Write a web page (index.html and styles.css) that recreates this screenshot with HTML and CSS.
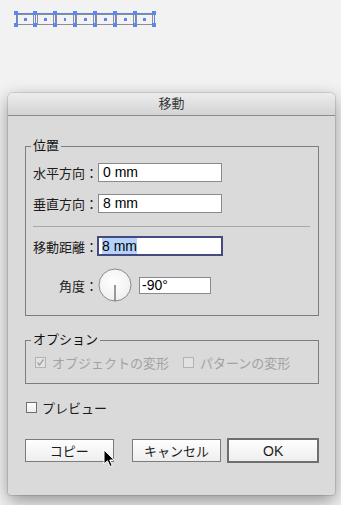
FILE: index.html
```html
<!DOCTYPE html>
<html lang="ja">
<head>
  <meta charset="UTF-8" />
  <title>移動</title>
  <link rel="stylesheet" href="styles.css">
</head>
<body>
  <div class="artboard">
    <svg class="selection" width="144" height="18" viewBox="0 0 144 18">
      <g fill="none" stroke="#8d8d8d" stroke-width="1">
        <rect x="3.5" y="3.5" width="16" height="10" />
        <rect x="23.5" y="3.5" width="16" height="10" />
        <rect x="42.5" y="3.5" width="17" height="10" />
        <rect x="62.5" y="3.5" width="17" height="10" />
        <rect x="82.5" y="3.5" width="17" height="10" />
        <rect x="102.5" y="3.5" width="17" height="10" />
        <rect x="122.5" y="3.5" width="16" height="10" />
      </g>
      <g stroke="#5b86ee" stroke-width="1">
        <line x1="2" y1="2.5" x2="140" y2="2.5" />
        <line x1="2.5" y1="2" x2="2.5" y2="14" />
        <line x1="21.5" y1="2" x2="21.5" y2="14" />
        <line x1="41.5" y1="2" x2="41.5" y2="14" />
        <line x1="61.5" y1="2" x2="61.5" y2="14" />
        <line x1="81.5" y1="2" x2="81.5" y2="14" />
        <line x1="101.5" y1="2" x2="101.5" y2="14" />
        <line x1="121.5" y1="2" x2="121.5" y2="14" />
        <line x1="140.5" y1="2" x2="140.5" y2="14" />
      </g>
      <g fill="#5b86ee">
        <rect x="0" y="0" width="4" height="4" /><rect x="0" y="12" width="4" height="4" />
        <rect x="19" y="0" width="4" height="4" /><rect x="19" y="12" width="4" height="4" />
        <rect x="39" y="0" width="4" height="4" /><rect x="39" y="12" width="4" height="4" />
        <rect x="59" y="0" width="4" height="4" /><rect x="59" y="12" width="4" height="4" />
        <rect x="79" y="0" width="4" height="4" /><rect x="79" y="12" width="4" height="4" />
        <rect x="99" y="0" width="4" height="4" /><rect x="99" y="12" width="4" height="4" />
        <rect x="119" y="0" width="4" height="4" /><rect x="119" y="12" width="4" height="4" />
        <rect x="138" y="0" width="4" height="4" /><rect x="138" y="12" width="4" height="4" />
        <rect x="10" y="7" width="3" height="3" />
        <rect x="30" y="7" width="3" height="3" />
        <rect x="50" y="7" width="2" height="3" />
        <rect x="70" y="7" width="3" height="3" />
        <rect x="90" y="7" width="3" height="3" />
        <rect x="110" y="7" width="3" height="3" />
        <rect x="129" y="7" width="3" height="3" />
      </g>
    </svg>
  </div>

  <div class="dialog">
    <div class="titlebar">移動</div>
    <div class="dialog-body">
      <fieldset class="group position">
        <legend>位置</legend>
        <div class="field-row">
          <label class="field-label">水平方向：</label>
          <div class="input">0 mm</div>
        </div>
        <div class="field-row next">
          <label class="field-label">垂直方向：</label>
          <div class="input">8 mm</div>
        </div>
        <div class="separator"></div>
        <div class="field-row">
          <label class="field-label">移動距離：</label>
          <div class="input focused"><span class="selected">8 mm</span></div>
        </div>
        <div class="field-row angle-row">
          <label class="field-label">角度：</label>
          <svg class="dial" width="34" height="34" viewBox="0 0 34 34">
            <defs>
              <radialGradient id="dialFill" cx="0.45" cy="0.4" r="0.7">
                <stop offset="0" stop-color="#ffffff" />
                <stop offset="1" stop-color="#ececec" />
              </radialGradient>
            </defs>
            <circle cx="17" cy="17" r="16" fill="url(#dialFill)" stroke="#8a8a8a" stroke-width="1" />
            <line x1="17" y1="17" x2="17" y2="33" stroke="#7a7a7a" stroke-width="1.5" />
          </svg>
          <div class="input small">-90°</div>
        </div>
      </fieldset>

      <fieldset class="group options">
        <legend>オプション</legend>
        <div class="option-row">
          <span class="option">
            <svg class="check" width="11" height="11" viewBox="0 0 11 11">
              <rect x="0.5" y="0.5" width="10" height="10" fill="#e2e2e2" stroke="#b3b3b3" />
              <path d="M2.5 5.5 L4.5 8 L8.5 2.5" fill="none" stroke="#a5a5a5" stroke-width="1.4" />
            </svg>
            オブジェクトの変形
          </span>
          <span class="option">
            <svg class="check" width="11" height="11" viewBox="0 0 11 11">
              <rect x="0.5" y="0.5" width="10" height="10" fill="#e2e2e2" stroke="#b3b3b3" />
            </svg>
            パターンの変形
          </span>
        </div>
      </fieldset>

      <div class="preview-row">
        <svg class="check" width="11" height="11" viewBox="0 0 11 11">
          <defs>
            <linearGradient id="boxFill" x1="0" y1="0" x2="0" y2="1">
              <stop offset="0" stop-color="#ffffff" />
              <stop offset="1" stop-color="#ededed" />
            </linearGradient>
          </defs>
          <rect x="0.5" y="0.5" width="10" height="10" fill="url(#boxFill)" stroke="#6f6f6f" />
        </svg>
        プレビュー
      </div>

      <div class="button-row">
        <button class="btn copy">コピー</button>
        <button class="btn cancel">キャンセル</button>
        <button class="btn ok">OK</button>
      </div>
    </div>
  </div>

  <svg class="cursor" width="13" height="20" viewBox="0 0 13 20">
    <path d="M1 1 L1 15 L4.5 11.8 L7 17.5 L9.2 16.6 L6.8 11 L11.2 11 Z" fill="#000" stroke="#fff" stroke-width="1" stroke-linejoin="round" />
  </svg>
</body>
</html>
```

FILE: styles.css
```css
html, body {
  margin: 0;
  padding: 0;
  height: 505px;
  overflow: hidden;
}

body {
  background-color: #f2f2f2;
  font-family: 'Liberation Sans', 'Noto Sans CJK JP', sans-serif;
  font-size: 13px;
  color: #1c1c1c;
}

.artboard {
  height: 93px;
  padding: 11px 0 0 14px;
  box-sizing: border-box;
}

.selection {
  display: block;
}

.dialog {
  margin-left: 8px;
  width: 327px;
  height: 402px;
  background-color: #dadada;
  border-radius: 5px 5px 3px 3px;
  box-shadow: 0 6px 18px rgba(0, 0, 0, 0.4), 0 0 0 1px rgba(0, 0, 0, 0.1);
  overflow: hidden;
}

.titlebar {
  height: 22px;
  line-height: 22px;
  border-bottom: 1px solid #8c8c8c;
  background: linear-gradient(#ededed, #d3d3d3);
  text-align: center;
  color: #3a3a3a;
}

.dialog-body {
  padding: 22px 16px 0 17px;
}

.group {
  margin: 0;
  min-width: 0;
  border: 1px solid #7d7d7d;
  padding: 9px 0 13px 7px;
}

.group legend {
  margin-left: -2px;
  padding: 0 2px;
  line-height: 16px;
  color: #111;
}

.field-row {
  display: flex;
  align-items: center;
}

.field-row.next {
  margin-top: 12px;
}

.field-label {
  width: 65px;
  text-align: right;
  white-space: nowrap;
}

.input {
  width: 124px;
  height: 19px;
  box-sizing: border-box;
  border: 1px solid #8a8a8a;
  background-color: #fff;
  padding-left: 4px;
  font-size: 14px;
  line-height: 17px;
  color: #000;
  white-space: nowrap;
}

.input.focused {
  width: 126px;
  height: 20px;
  margin-left: -1px;
  border: 2px solid #454a80;
  padding-left: 3px;
  line-height: 16px;
}

.selected {
  background-color: #b5d3fa;
}

.separator {
  height: 1px;
  background-color: #a8a8a8;
  margin: 13px 8px 9px 0;
}

.angle-row {
  margin-top: 12px;
}

.dial {
  display: block;
}

.input.small {
  width: 72px;
  height: 17px;
  margin-left: 7px;
  padding-left: 2px;
  line-height: 15px;
}

.options {
  margin-top: 16px;
  padding: 6px 0 13px 7px;
}

.option-row {
  display: flex;
  align-items: center;
  height: 16px;
  padding-left: 2px;
  color: #a2a2a2;
}

.option {
  display: flex;
  align-items: center;
  gap: 6px;
  margin-right: 14px;
}

.check {
  display: block;
  flex: none;
}

.preview-row {
  display: flex;
  align-items: center;
  gap: 5px;
  height: 17px;
  margin-top: 15px;
  padding-left: 1px;
}

.button-row {
  display: flex;
  align-items: center;
  height: 25px;
  margin-top: 22px;
}

.btn {
  height: 23px;
  width: 89px;
  padding: 0;
  border: 1px solid #7b7b7b;
  border-radius: 0;
  background: linear-gradient(#fefefe, #eeeeee);
  font-family: 'Liberation Sans', 'Noto Sans CJK JP', sans-serif;
  font-size: 13px;
  color: #1c1c1c;
}

.btn.cancel {
  width: 90px;
  margin-left: 18px;
}

.btn.ok {
  width: 92px;
  height: 25px;
  margin-left: 6px;
  border: 2px solid #6e6e6e;
  font-size: 14px;
}

.cursor {
  position: absolute;
  left: 103px;
  top: 449px;
}
```
